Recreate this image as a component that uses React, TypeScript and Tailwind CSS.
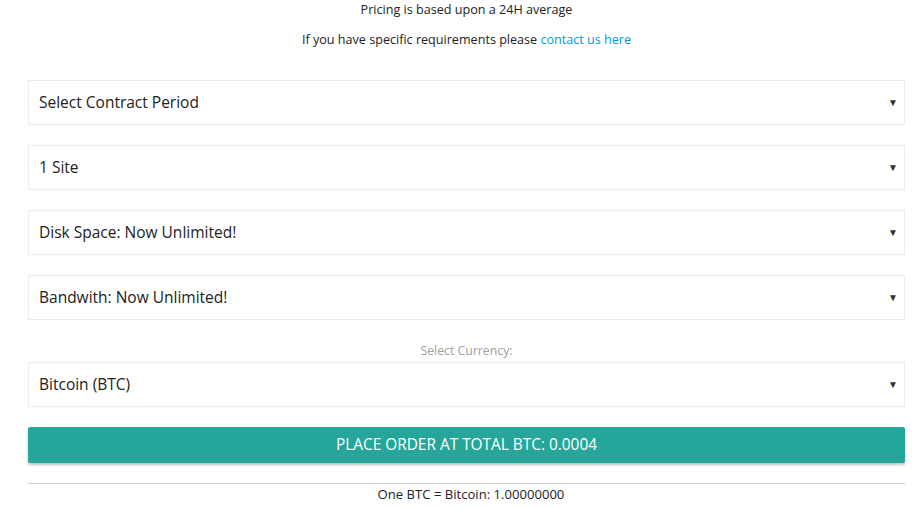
import React from "react";

const font = { fontFamily: '"Open Sans", "Noto Sans", sans-serif' };

function Sel({ label }: { label: string }) {
  return (
    <div className="flex h-[45px] items-center justify-between border border-[#ececec] bg-white pl-[10px] pr-[6px] text-[15.5px] text-[#222]">
      <span>{label}</span>
      <span className="text-[10px] text-[#333]">▼</span>
    </div>
  );
}

export default function App() {
  return (
    <div className="min-h-[508px] bg-white px-[28px] text-[#222]" style={font}>
      <div className="w-[877px]">
        <p className="pt-[1px] text-center text-[12.6px] leading-[17px]">Pricing is based upon a 24H average</p>
        <p className="mt-[13px] text-center text-[12.6px] leading-[17px]">
          If you have specific requirements please <span className="text-[#039be5]">contact us here</span>
        </p>
        <div className="mt-[32px] flex flex-col gap-[20px]">
          <Sel label="Select Contract Period" />
          <Sel label="1 Site" />
          <Sel label="Disk Space: Now Unlimited!" />
          <Sel label="Bandwith: Now Unlimited!" />
        </div>
        <p className="mt-[23px] text-center text-[12.3px] leading-[16px] text-[#9e9e9e]">Select Currency:</p>
        <div className="mt-[3px]">
          <Sel label="Bitcoin (BTC)" />
        </div>
        <div className="mt-[20px] flex h-[36px] items-center justify-center rounded-[2px] bg-[#26a69a] text-[15.4px] text-white shadow-[0_2px_3px_rgba(0,0,0,0.25)]">
          PLACE ORDER AT TOTAL BTC: 0.0004
        </div>
        <div className="mt-[20px] border-t border-[#cccccc]" />
        <p className="mt-[2px] pl-[9px] text-center text-[13.1px] leading-[17px]">One BTC = Bitcoin: 1.00000000</p>
      </div>
    </div>
  );
}
